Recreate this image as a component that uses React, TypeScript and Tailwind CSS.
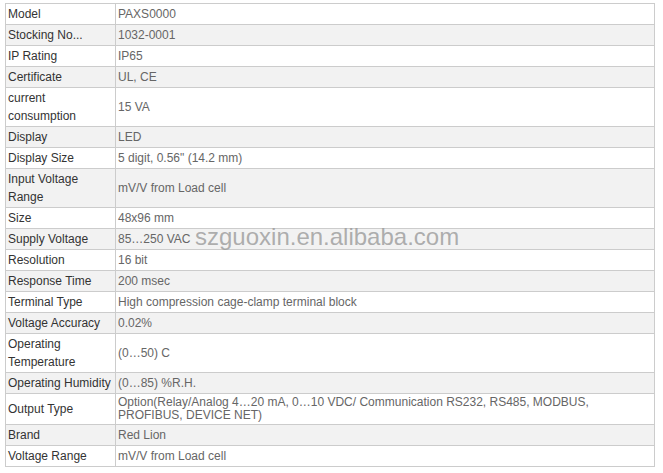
const rows: [string, string][] = [
  ["Model", "PAXS0000"],
  ["Stocking No...", "1032-0001"],
  ["IP Rating", "IP65"],
  ["Certificate", "UL, CE"],
  ["current consumption", "15 VA"],
  ["Display", "LED"],
  ["Display Size", "5 digit, 0.56\" (14.2 mm)"],
  ["Input Voltage Range", "mV/V from Load cell"],
  ["Size", "48x96 mm"],
  ["Supply Voltage", "85…250 VAC"],
  ["Resolution", "16 bit"],
  ["Response Time", "200 msec"],
  ["Terminal Type", "High compression cage-clamp terminal block"],
  ["Voltage Accuracy", "0.02%"],
  ["Operating Temperature", "(0…50) C"],
  ["Operating Humidity", "(0…85) %R.H."],
  [
    "Output Type",
    "Option(Relay/Analog 4…20 mA, 0…10 VDC/ Communication RS232, RS485, MODBUS, PROFIBUS, DEVICE NET)",
  ],
  ["Brand", "Red Lion"],
  ["Voltage Range", "mV/V from Load cell"],
];

export default function App() {
  return (
    <div className="relative min-h-[473px] bg-white pl-[5px] pt-[3px] font-['Liberation_Sans',Arial,sans-serif] text-[12px]">
      <table className="w-[650px] table-fixed border-collapse">
        <colgroup>
          <col className="w-[110px]" />
          <col />
        </colgroup>
        <tbody>
          {rows.map(([label, value], i) => (
            <tr key={label} className={i % 2 === 1 ? "bg-[#f2f2f2]" : "bg-white"}>
              <td className="border border-[#cccccc] py-[1px] pl-[2px] pr-[2px] align-middle leading-[18px] text-[#333333]">
                {label}
              </td>
              <td className="border border-[#cccccc] py-[1px] pl-[2px] pr-[60px] align-middle text-[#666666]">
                {label === "Output Type" ? (
                  <p className="py-[1px] leading-[13px]">{value}</p>
                ) : (
                  <p className="leading-[18px]">{value}</p>
                )}
              </td>
            </tr>
          ))}
        </tbody>
      </table>
      <div className="pointer-events-none absolute left-[195px] top-[221px] text-[24px] leading-[32px] text-[#9a9a9a]/80">
        szguoxin.en.alibaba.com
      </div>
    </div>
  );
}
